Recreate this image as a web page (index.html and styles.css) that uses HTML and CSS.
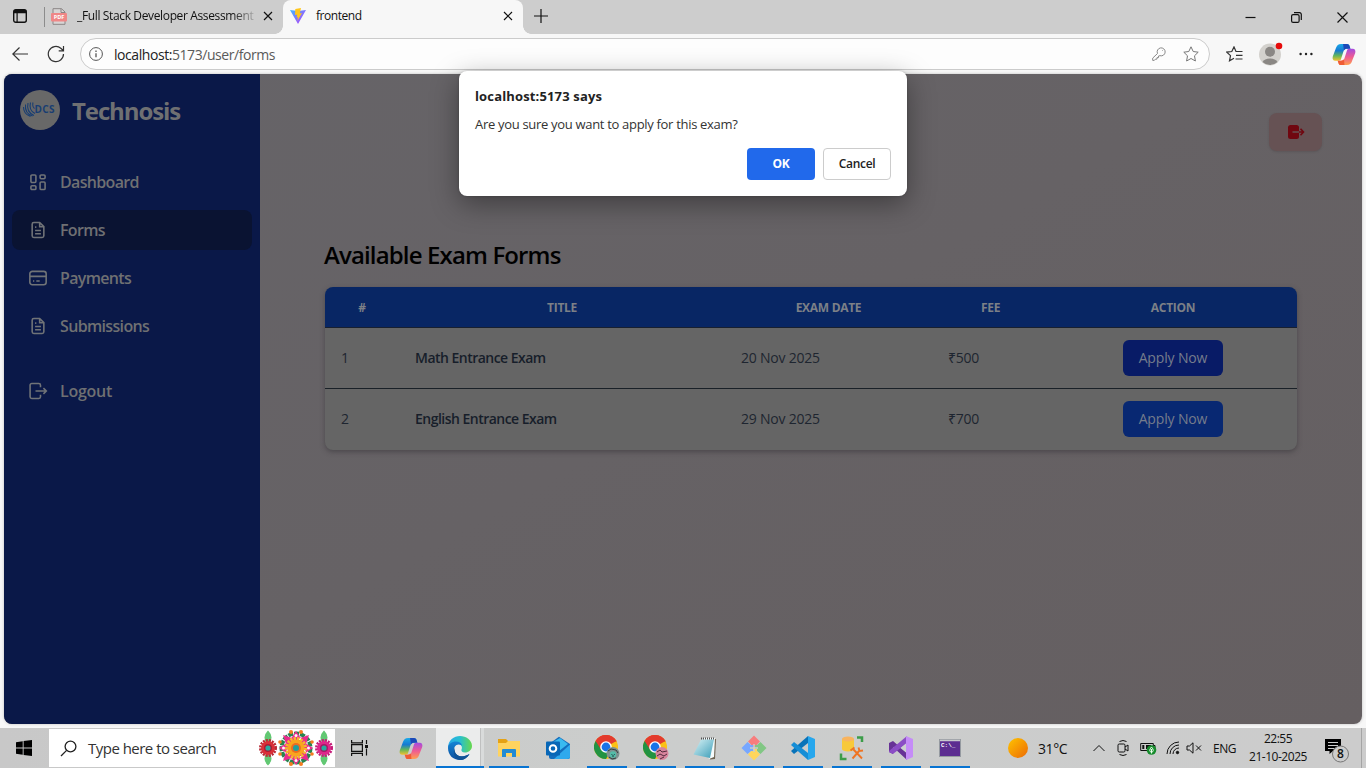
FILE: index.html
```html
<!DOCTYPE html>
<html lang="en">
<head>
<meta charset="utf-8">
<title>frontend</title>
<link rel="stylesheet" href="styles.css">
</head>
<body>
<svg class="defs" aria-hidden="true">
  <defs>
    <linearGradient id="cpA" x1="0" y1="0" x2="0" y2="1"><stop offset="0" stop-color="#1aa9e8"/><stop offset=".4" stop-color="#1679d2"/><stop offset=".7" stop-color="#63b65a"/><stop offset="1" stop-color="#f2c230"/></linearGradient>
    <linearGradient id="cpB" x1="0" y1="0" x2="0" y2="1"><stop offset="0" stop-color="#a34be0"/><stop offset=".5" stop-color="#ee5b93"/><stop offset="1" stop-color="#ffa04e"/></linearGradient>
    <linearGradient id="vt" x1="0" y1="0" x2="1" y2="1"><stop offset="0" stop-color="#41b8ff"/><stop offset="1" stop-color="#bd34fe"/></linearGradient>
    <linearGradient id="edA" x1="0" y1="0" x2="1" y2="0"><stop offset="0" stop-color="#2aa9e8"/><stop offset=".5" stop-color="#27bfd0"/><stop offset="1" stop-color="#67d84b"/></linearGradient>
    <linearGradient id="edB" x1="0" y1="0" x2="0" y2="1"><stop offset="0" stop-color="#1585d5"/><stop offset="1" stop-color="#0c4f9e"/></linearGradient>
    <linearGradient id="sun" x1="0" y1="0" x2="1" y2="1"><stop offset="0" stop-color="#ffc400"/><stop offset="1" stop-color="#ec6a06"/></linearGradient>
    <linearGradient id="np" x1="0" y1="0" x2="1" y2="1"><stop offset="0" stop-color="#d9f3f6"/><stop offset="1" stop-color="#3b9db8"/></linearGradient>
    <symbol id="copilot" viewBox="0 0 24 24">
      <path d="M9 1h6c2 0 2.500 1 3 3l.7 2H15c-2 0-3 1-3.500 2.600L9 16.500C8.500 18 8 18.500 6 18.500H3C.5 18.500-.4 16.500.3 14L3.500 5.500C4.500 2.500 6 1 9 1z" fill="url(#cpA)"/>
      <path d="M11 1h4c2 0 2.500 1 3 3l.7 2H15c-1.500 0-2.500.7-3 1.800z" fill="#1c49b8"/>
      <path d="M15 23H9c-2 0-2.500-1-3-3l-.6-1.600H9c2 0 3-1 3.500-2.600L15 8c.5-1.500 1-2 3-2h3c2.500 0 3.400 2 2.700 4.500L20.500 18.500c-1 3-2.500 4.500-5.500 4.500z" fill="url(#cpB)"/>
      <path d="M12.500 23H9c-2 0-2.500-1-3-3l-.6-1.600H9c1.300 0 2.300-.5 3-1.500z" fill="#ef5c35"/>
    </symbol>
    <symbol id="doc" viewBox="0 0 24 24"><path d="M14 3H7a2 2 0 0 0-2 2v14a2 2 0 0 0 2 2h10a2 2 0 0 0 2-2V8zM14 3v5h5M8.500 12.500h7M8.500 16.500h7M8.500 8.500h1.500"/></symbol>
    <symbol id="cross" viewBox="0 0 10 10"><path d="M1 1l8 8M9 1l-8 8"/></symbol>
    <symbol id="chrome" viewBox="0 0 26 26">
      <circle cx="12" cy="12" r="12" fill="#fbc116"/>
      <path d="M12 12L1.600 6A12 12 0 0 1 22.400 6z" fill="#e33b2e"/><path d="M1.600 6A12 12 0 0 0 12 24l5.200-9L12 12z" fill="#229342"/><path d="M12 6.500h10.700L22.400 6A12 12 0 0 0 1.600 6L7 14.500z" fill="#e33b2e"/>
      <circle cx="12" cy="12" r="5.800" fill="#fff"/><circle cx="12" cy="12" r="4.400" fill="#1a73e8"/>
    </symbol>
  </defs>
</svg>

<header class="tabs">
  <div class="tab-actions"><svg width="14" height="14" viewBox="0 0 14 14"><rect x=".7" y=".7" width="12.600" height="12.600" rx="2" fill="none" stroke="#111" stroke-width="1.400"/><path d="M1 1h12v3.200H1zM3.500 4h1.200v9H3.500z" fill="#111"/></svg></div>
  <div class="tab tab-idle">
    <svg class="pdf" width="16" height="17" viewBox="0 0 16 17"><path d="M2 .7h8.500L14 4v12.300H2z" fill="#d8d5d5" stroke="#8b8585"/><path d="M10 .7V4.500h4" fill="none" stroke="#8b8585"/><rect x="0" y="5" width="16" height="8.500" rx="1" fill="#ef8787"/><text x="8" y="11.400" class="pdf-text">PDF</text></svg>
    <span class="tab-title fade">_Full Stack Developer Assessment</span>
    <svg class="cross" width="10" height="10"><use href="#cross"/></svg>
  </div>
  <div class="tab tab-active">
    <svg width="16" height="16" viewBox="0 0 16 16"><path d="M0 2l8 1 8-1-8 14z" fill="url(#vt)"/><path d="M11 0L5.300 1 5 7l2.200-.4-.6 3 1.400-.3-.7 3.700L12 5l-2.200.4z" fill="#ffc61c"/></svg>
    <span class="tab-title">frontend</span>
    <svg class="cross" width="10" height="10"><use href="#cross"/></svg>
  </div>
  <svg class="plus" width="14" height="14" viewBox="0 0 14 14"><path d="M7 0v14M0 7h14"/></svg>
  <div class="window-buttons">
    <svg width="11" height="11" viewBox="0 0 11 11"><path d="M.5 5.500h10"/></svg>
    <svg width="11" height="11" viewBox="0 0 11 11"><rect x=".6" y="2.600" width="7.500" height="7.800" rx="1.500"/><path d="M3 .6h5a2 2 0 0 1 2.300 2V8"/></svg>
    <svg width="11" height="11" viewBox="0 0 11 11"><path d="M.5.5l10 10M10.500.5l-10 10"/></svg>
  </div>
</header>

<div class="toolbar">
  <svg class="nav" width="16" height="14" viewBox="0 0 16 14"><path d="M16 7H.8M7.500.5L.8 7l6.700 6.500"/></svg>
  <svg class="nav" width="18" height="18" viewBox="0 0 18 18"><path d="M16.500 9A7.600 7.600 0 1 1 13.800 3.200l2.200 2M16.500 1v4.800h-4.800"/></svg>
  <div class="address">
    <svg width="14" height="14" viewBox="0 0 14 14"><circle cx="7" cy="7" r="6.400"/><path d="M7 6.200v4M7 3.600v1.300" stroke-width="1.300"/></svg>
    <span class="url"><b>localhost:</b>5173/user/forms</span>
    <svg class="key" width="14" height="14" viewBox="0 0 14 14"><path d="M5.500 6.500A4 4 0 1 1 8 8.700L6.500 9v1.600H5v1.500H3.500L2.300 13.400H.7v-2.300zM10.300 3.500h.6"/></svg>
    <svg class="fav" width="16" height="16" viewBox="0 0 16 16"><path d="M8 .8l2.200 4.700 5 .7-3.700 3.600.9 5.200L8 12.500 3.600 15l.9-5.200L.8 6.200l5-.7z"/></svg>
  </div>
  <svg class="nav favlist" width="17" height="16" viewBox="0 0 17 16"><path d="M10.500 5.500L10 5.400 8 .9 5.800 5.500l-5 .6 3.700 3.500-1 5.200L8 12.300M10 5.500h6.500M10 9.300h6.500M9.500 13h7"/></svg>
  <svg class="avatar" width="24" height="24" viewBox="0 0 24 24"><circle cx="11" cy="12.500" r="11" fill="#d3d1cd"/><circle cx="11" cy="9.800" r="5" fill="#8a8784"/><path d="M3.500 20a8 5.500 0 0 1 15 0 11 11 0 0 1-15 0z" fill="#8a8784"/><circle cx="20" cy="4" r="3.300" fill="#e60b0b"/></svg>
  <svg class="dots" width="14" height="4" viewBox="0 0 14 4"><circle cx="1.600" cy="2" r="1.200"/><circle cx="7" cy="2" r="1.200"/><circle cx="12.400" cy="2" r="1.200"/></svg>
  <svg class="cp" width="24" height="23"><use href="#copilot"/></svg>
</div>

<div class="viewport">
  <div class="page">
    <aside class="sidebar">
      <div class="brand">
        <svg width="40" height="40" viewBox="0 0 40 40"><circle cx="20" cy="20" r="20" fill="#686868"/><g fill="none" stroke="#193e72" stroke-width="1.100"><path d="M3.500 17q0 7 7 9.500M5.500 14.500q-1 9 7 11.500M8 13q-2 9 6 12.500M10.500 12.500q-2 8 4.500 11M13 12.500q-1 4 1.500 6"/></g><text x="14.500" y="23.300" class="logo-text">DCS</text></svg>
        <span>Technosis</span>
      </div>
      <nav class="menu">
        <a><svg viewBox="0 0 24 24"><rect x="3.500" y="3.500" width="6" height="9" rx="1.300"/><rect x="14.500" y="3.500" width="6" height="4.500" rx="1.300"/><rect x="3.500" y="16.500" width="6" height="4.500" rx="1.300"/><rect x="14.500" y="12" width="6" height="9" rx="1.300"/></svg><span>Dashboard</span></a>
        <a class="current"><svg><use href="#doc"/></svg><span>Forms</span></a>
        <a><svg viewBox="0 0 24 24"><rect x="2.200" y="4" width="19.600" height="16" rx="3"/><path d="M2.200 10h19.600M6 15.500h1.500M10 15.500h4"/></svg><span>Payments</span></a>
        <a><svg><use href="#doc"/></svg><span>Submissions</span></a>
        <a class="logout"><svg viewBox="0 0 24 24"><path d="M15 7.500V5a2 2 0 0 0-2-2H4.500a2 2 0 0 0-2 2v14a2 2 0 0 0 2 2H13a2 2 0 0 0 2-2v-2.500M9 12h13M18.500 8.500L22 12l-3.500 3.500"/></svg><span>Logout</span></a>
      </nav>
    </aside>
    <main class="content">
      <button class="exit"><svg width="18" height="16" viewBox="0 0 18 16"><rect x="1" y="1" width="11" height="14" rx="2.500" fill="#700710"/><path d="M11.500 8H16.500M13.500 4.800L16.500 8l-3 3.200" fill="none" stroke="#700710" stroke-width="1.600"/><path d="M5.500 8H12" stroke="#675052" stroke-width="1.300"/></svg></button>
      <h1>Available Exam Forms</h1>
      <table>
        <colgroup><col class="c1"><col class="c2"><col class="c3"><col class="c4"><col class="c5"></colgroup>
        <thead><tr><th>#</th><th>TITLE</th><th>EXAM DATE</th><th>FEE</th><th>ACTION</th></tr></thead>
        <tbody>
          <tr><td>1</td><td class="name"><span>Math Entrance Exam</span></td><td>20 Nov 2025</td><td class="fee">₹500</td><td class="act"><button class="apply focused">Apply Now</button></td></tr>
          <tr><td>2</td><td class="name"><span>English Entrance Exam</span></td><td>29 Nov 2025</td><td class="fee">₹700</td><td class="act"><button class="apply">Apply Now</button></td></tr>
        </tbody>
      </table>
    </main>
  </div>
</div>

<section class="dialog" role="dialog">
  <h2>localhost:5173 says</h2>
  <p>Are you sure you want to apply for this exam?</p>
  <div class="dialog-buttons"><button class="ok">OK</button><button class="cancel">Cancel</button></div>
</section>

<footer class="taskbar">
  <div class="start"><svg width="16" height="16" viewBox="0 0 16 16"><path d="M0 2.200L6.700 1.200v6.300H0zM7.600 1.100L16 0v7.500H7.600zM0 8.500h6.700v6.300L0 13.800zM7.600 8.500H16V16l-8.400-1.100z"/></svg></div>
  <div class="search">
    <svg class="lens" width="17" height="17" viewBox="0 0 17 17"><circle cx="10.500" cy="6.500" r="5.400"/><path d="M6.600 10.400L1 16"/></svg>
    <span>Type here to search</span>
    <svg class="flowers" width="74" height="38" viewBox="0 0 74 38">
      <path d="M9 3q5 5 0 12-5-7 0-12zM9 35q5-5 0-12-5 7 0 12zM65 3q5 5 0 12-5-7 0-12zM65 35q5-5 0-12-5 7 0 12z" fill="#62c873" stroke="#62c873" stroke-width="2"/>
      <circle cx="9" cy="19" r="7.500" fill="none" stroke="#b82936" stroke-width="3" stroke-dasharray="2 1"/><circle cx="9" cy="19" r="7" fill="#da3038"/><circle cx="9" cy="19" r="4" fill="#a81c35"/><circle cx="9" cy="19" r="2.600" fill="#28aaa0"/>
      <circle cx="65" cy="19" r="7.500" fill="none" stroke="#c41c79" stroke-width="3" stroke-dasharray="2 1"/><circle cx="65" cy="19" r="7" fill="#df268b"/><circle cx="65" cy="19" r="4" fill="#a41965"/><circle cx="65" cy="19" r="2.600" fill="#28aaa0"/>
      <circle cx="37" cy="19" r="14.500" fill="none" stroke="#288451" stroke-width="4" stroke-dasharray="5 1"/>
      <g fill="#e92c8c"><path d="M37 2l6 9H31zM37 36l6-9H31zM20 19l9-6v12zM54 19l-9-6v12zM24 6l12 4-8 8zM50 6l-12 4 8 8zM24 32l12-4-8-8zM50 32l-12-4 8-8z"/></g>
      <g fill="#fff3f8"><circle cx="37" cy="6.500" r="1.500"/><circle cx="37" cy="31.500" r="1.500"/><circle cx="24.500" cy="19" r="1.500"/><circle cx="49.500" cy="19" r="1.500"/></g>
      <g fill="#f47b20"><circle cx="32" cy="3" r="2"/><circle cx="42" cy="3" r="2"/><circle cx="32" cy="35" r="2"/><circle cx="42" cy="35" r="2"/><circle cx="21" cy="13" r="1.800"/><circle cx="21" cy="25" r="1.800"/><circle cx="53" cy="13" r="1.800"/><circle cx="53" cy="25" r="1.800"/></g>
      <circle cx="37" cy="19" r="9.500" fill="none" stroke="#f5b72e" stroke-width="3" stroke-dasharray="2.500 1"/><circle cx="37" cy="19" r="8.500" fill="#f9a51e"/><circle cx="37" cy="19" r="5" fill="#ec6c22"/><circle cx="37" cy="19" r="3" fill="#239e9a"/>
    </svg>
  </div>
  <div class="apps">
    <div class="app view"><svg width="18" height="16" viewBox="0 0 18 16"><path d="M.6 0v2.800h10.800V0M.6 4.600h10.800v6.800H.6zM.6 16v-2.700h10.800V16M15.500 0v4M15.500 8.500V15.500" fill="none" stroke="#111" stroke-width="1.200"/><rect x="14" y="5" width="3" height="3" fill="#111"/></svg></div>
    <div class="app"><svg width="24" height="23"><use href="#copilot"/></svg></div>
    <div class="app selected"><svg width="26" height="26" viewBox="0 0 26 26"><path d="M1 13C1 5 7 1 13 1s12 4 12 10c0 4-3.500 6.500-7 6.500-3 0-4-1.500-3.500-3 1.500-3-1-6-5-6-5 0-8.500 4-8.500 4.500z" fill="url(#edA)"/><path d="M1 13c0-4 4-6.500 8-6.500 3 0 5.500 1.500 6 4-5-3-9 1-7.500 5.500C9 22 16 23 22.500 19 20 23 17 25 13 25 6 25 1 20 1 13z" fill="url(#edB)"/><path d="M8 12.500c-2 7 5 12 14.500 6.500-3 5-7 6-9.500 6-5-1-8-7-5-12.500z" fill="#105396"/></svg></div>
    <div class="app running"><svg width="22" height="20" viewBox="0 0 22 20"><path d="M0 1h8l2 2h12v4H0z" fill="#e5a214"/><path d="M0 5h8l2-2h12v15.500H0z" fill="#ffd35e"/><path d="M4 19v-7q0-1 1-1h12q1 0 1 1v7h-4v-4H8v4z" fill="#228bd4"/></svg></div>
    <div class="app"><svg width="26" height="24" viewBox="0 0 26 24"><path d="M4 8L14 .8 25 8v13q0 2-2 2H6q-2 0-2-2z" fill="#136dbd"/><path d="M8 6l7-4 8 6-9 7-6-4z" fill="#39baf0"/><path d="M25 8.500v12q0 2.500-3 2.500H9z" fill="#2fa9ed"/><rect x="1" y="5.500" width="14" height="14" rx="1" fill="#0867b7"/><circle cx="8" cy="12.500" r="3.300" fill="none" stroke="#fff" stroke-width="2"/></svg></div>
    <div class="app running"><svg width="26" height="26" viewBox="0 0 26 26"><use href="#chrome" width="26" height="26"/><circle cx="19" cy="18.500" r="6.500" fill="#7f918f"/><path d="M14 16l3-2 5 1 2 3M15 22l3 2 4-1" fill="none" stroke="#343d3d" stroke-width="1"/><circle cx="19" cy="19.500" r="3.200" fill="#54bda9"/><path d="M17.500 19.500h.8m1.600 0h.8m-2.700 1.500h2" stroke="#183c3c"/></svg></div>
    <div class="app running"><svg width="26" height="26" viewBox="0 0 26 26"><use href="#chrome" width="26" height="26"/><circle cx="19" cy="18.500" r="6.500" fill="#d7849c"/><path d="M14 17l3-2 2 2 5-1M14 21l3-2 4 2 3-2M17 24l4-2" fill="none" stroke="#522c3d" stroke-width="1"/></svg></div>
    <div class="app running"><svg width="24" height="24" viewBox="0 0 24 24"><path d="M12 2l11 1-1 20-5 .5z" fill="#6d6352"/><path d="M10 2h12l-1 19-5 2z" fill="#f5fbfb"/><path d="M8 3.500h13l-4 18.500L.5 18.500z" fill="url(#np)"/><path d="M8 2.500h14" stroke="#555" stroke-width="2" stroke-dasharray="1 1"/></svg></div>
    <div class="app running"><svg width="26" height="26" viewBox="0 0 26 26"><path d="M13 .5l6 6-3 3v2.500h-6v-2.500L7 6.500z" fill="#f77d7d"/><path d="M25.500 13l-6 6-3.500-3h-2v-6h2l3.500-3z" fill="#81c784"/><path d="M13 25.500l-6-6 3-3.500v-2h6v2l3 3.500z" fill="#ffd65c"/><path d="M.5 13l6-6 3.500 3h2v6h-2l-3.500 3z" fill="#77a7ff"/><path d="M13 9v8M9 13h8" stroke="#cbcdcc" stroke-width="1.500"/></svg></div>
    <div class="app running"><svg width="26" height="26" viewBox="0 0 26 26"><path d="M18 1l7 3v18l-7 3z" fill="#27a7ed"/><path d="M18 1v7L4 19l-3-3z" fill="#0873b9"/><path d="M18 25v-7L4 7l-3 3z" fill="#168ed6"/></svg></div>
    <div class="app running"><svg width="26" height="26" viewBox="0 0 26 26"><path d="M3 4v10a6 2.500 0 0 0 12 0V4z" fill="#f8c93a"/><ellipse cx="9" cy="4" rx="6" ry="2.500" fill="#f8b45e"/><path d="M18 2.500h5V7M2 18.500V24h5.500" fill="none" stroke="#3c9d49" stroke-width="2.500"/><path d="M13.500 23.500l7-8M14.500 14.500l8.500 9M11.500 15.500l4-3M19.500 12.500l1 3.500 3.500-.5" stroke="#ef7423" stroke-width="1.900" fill="none"/></svg></div>
    <div class="app running"><svg width="26" height="26" viewBox="0 0 26 26"><path d="M1 8l4-2 14 12v7L5 12v7l-4-2z" fill="#673296"/><path d="M1 17l4 2L19 8V1L1 16z" fill="#8b4dc5"/><path d="M18 1l7 3v18l-7 3z" fill="#c58cf7"/><path d="M12.500 13l5.500-4.500v9z" fill="#cdd0d0"/></svg></div>
    <div class="app running"><svg width="22" height="18" viewBox="0 0 22 18"><rect x=".5" y=".5" width="21" height="17" fill="#5c2d91" stroke="#959aa0"/><path d="M1 1.500h20" stroke="#c8cace" stroke-width="1.500"/><text x="2" y="8" class="cmd-text">C:\_</text></svg></div>
  </div>
  <div class="tray">
    <svg class="sun" width="22" height="22" viewBox="0 0 22 22"><circle cx="11" cy="11" r="10" fill="url(#sun)"/></svg>
    <span class="temp">31°C</span>
    <svg class="chev" width="12" height="8" viewBox="0 0 12 8"><path d="M.5 7L6 1.500 11.500 7"/></svg>
    <svg class="meet" width="12" height="16" viewBox="0 0 12 16"><rect x="1" y="4" width="7" height="8" rx="1.200"/><path d="M8 7l3-2v6L8 9M2.500 1.500Q6-.5 9.500 1.500M2.500 14.500Q6 16.500 9.500 14.500"/></svg>
    <svg class="battery" width="17" height="14" viewBox="0 0 17 14"><path d="M.7 2.500h12.600v7H.7zM13.500 4.500h1.500v3h-1.500" fill="none" stroke="#111"/><path d="M2.300 4h2v4h-2zM6 4h5v4H6z" fill="#111"/><circle cx="11.500" cy="9" r="4.800" fill="#168b2c"/><path d="M11.500 6q3.500 4 0 5.500Q8 10 11.500 6zM11.500 8v4.500" fill="none" stroke="#e8ffeb" stroke-width="1"/></svg>
    <svg class="wifi" width="14" height="14" viewBox="0 0 14 14"><path d="M1 13A12 12 0 0 1 13 1M4 13a9 9 0 0 1 9-9M7 13a6 6 0 0 1 6-6" /><circle cx="11.500" cy="11.500" r="1.200" fill="#111"/></svg>
    <svg class="volume" width="16" height="12" viewBox="0 0 16 12"><path d="M1 4h2.500L7 .8v10.400L3.500 8H1zM10 3.500l5 5M15 3.500l-5 5"/></svg>
    <span class="lang">ENG</span>
    <div class="clock"><span>22:55</span><span>21-10-2025</span></div>
    <div class="notice"><svg width="26" height="26" viewBox="0 0 26 26"><path d="M1 1h16v12H9l-3.500 3v-3H1z" fill="#000"/><path d="M4 4.500h10M4 7.500h10M4 10.500h6" stroke="#ccc"/><circle cx="16.500" cy="16" r="8" fill="#ccc" stroke="#777"/><text x="16.500" y="20.200" class="badge-text">8</text></svg></div>
    <i class="peek"></i>
  </div>
</footer>
</body>
</html>
```
FILE: styles.css
```css
* { box-sizing: border-box; }
body { margin: 0; width: 1366px; height: 768px; overflow: hidden; display: flex; flex-direction: column; background: #f7f7f7; font-family: "Open Sans", "Noto Sans", sans-serif; position: relative; color: #111; }
svg { display: block; flex: none; }
span, p, h1, h2, td, th, button { white-space: nowrap; }
button { border: 0; font-family: inherit; padding: 0; }
.defs { position: absolute; width: 0; height: 0; }

.tabs { height: 34px; flex: none; background: #cdcdcd; display: flex; align-items: center; }
.tab-actions { width: 45px; height: 20px; padding: 2px 0 0 13px; border-right: 1px solid #8c8c8c; }
.tab { display: flex; align-items: center; height: 34px; font-size: 12px; }
.tab-idle { width: 238px; padding: 0 10px 2px 6px; }
.tab-idle .tab-title { margin-left: 10px; width: 180px; letter-spacing: -.36px; }
.fade { -webkit-mask-image: linear-gradient(90deg, #000 155px, transparent 182px); mask-image: linear-gradient(90deg, #000 155px, transparent 182px); }
.tab-active { width: 240px; padding: 0 10px 2px 7px; background: #f7f7f7; border-radius: 8px 8px 0 0; position: relative; }
.tab-active::before, .tab-active::after { content: ""; position: absolute; bottom: 0; width: 8px; height: 8px; }
.tab-active::before { left: -8px; background: radial-gradient(circle at 0 0, #cdcdcd 7.5px, #f7f7f7 8px); }
.tab-active::after { right: -8px; background: radial-gradient(circle at 100% 0, #cdcdcd 7.5px, #f7f7f7 8px); }
.tab-active .tab-title { margin-left: 10px; letter-spacing: -.45px; }
.tab-title { padding-bottom: 1px; }
.tab .cross { margin-left: auto; }
.cross, .plus, .window-buttons svg { stroke: #111; stroke-width: 1.2; fill: none; }
.plus { margin: 0 0 3px 11px; }
.window-buttons { margin: 0 18px 0 auto; display: flex; gap: 35px; }
.pdf-text { font: bold 5.500px "Open Sans", sans-serif; fill: #fff; text-anchor: middle; }

.toolbar { height: 40px; flex: none; display: flex; align-items: center; padding: 0 10px 0 12px; background: #f7f7f7; }
.nav { fill: none; stroke: #333; stroke-width: 1.2; }
.nav + .nav { margin-left: 19px; }
.address { margin-left: 15px; width: 1130px; height: 32px; border: 1px solid #cbcbcb; border-radius: 16px; background: #fdfdfd; display: flex; align-items: center; padding: 0 10px 0 8px; fill: none; stroke: #555; }
.address span { stroke: none; }
.url { margin-left: 11px; font-size: 14px; color: #5a5a5a; letter-spacing: -.44px; }
.url b { font-weight: 400; color: #222; }
.key { margin-left: auto; stroke: #888; }
.fav { margin-left: 17px; stroke: #777; }
.favlist { margin-left: 16px; }
.avatar { margin-left: 16px; }
.dots { margin-left: 16px; fill: #222; }
.cp { margin-left: auto; }

.viewport { height: 654px; flex: none; padding: 0 4px 4px; }
.page { height: 650px; display: flex; border-radius: 8px; overflow: hidden; box-shadow: 0 0 3px #bbb; background: linear-gradient(150deg, #666468 0%, #666265 50%, #655f61 100%); }
.sidebar { width: 256px; background: #0a1848; color: #6f7072; padding: 16px 8px; }
.brand { height: 40px; display: flex; align-items: center; gap: 12px; padding-left: 8px; font-size: 24px; font-weight: 700; letter-spacing: -1.1px; }
.logo-text { font: 700 10px "Open Sans", sans-serif; letter-spacing: .4px; fill: #193e72; }
.menu { display: flex; flex-direction: column; gap: 8px; padding-top: 32px; }
.menu a { height: 40px; border-radius: 8px; display: flex; align-items: center; gap: 12px; padding-left: 16px; font-size: 16px; font-weight: 600; letter-spacing: -.66px; }
.menu svg { width: 20px; height: 20px; fill: none; stroke: #707377; stroke-width: 1.9; }
.menu .current { background: #0a1332; }
.menu .logout { margin-top: 17px; letter-spacing: -.25px; }
.content { flex: 1; padding: 39px 40px 0 64px; display: flex; flex-direction: column; }
.exit { align-self: flex-end; width: 53px; height: 38px; border-radius: 8px; background: #665254; display: flex; align-items: center; justify-content: center; box-shadow: 0 1px 2px rgba(60,50,55,.25); }
h1 { margin: 88px 0 0; font-size: 24px; line-height: 32px; font-weight: 600; letter-spacing: -.86px; color: #000; }
table { margin: 16px 0 0 1px; width: 972px; table-layout: fixed; border-collapse: separate; border-spacing: 0; border-radius: 8px; overflow: hidden; background: #656565; box-shadow: 0 2px 5px rgba(50,46,52,.5); font-size: 14px; color: #1e2530; }
.c1 { width: 74px; } .c2 { width: 326px; } .c3 { width: 207px; } .c4 { width: 117px; } .c5 { width: 248px; }
th { height: 41px; padding: 0; background: #082664; border-bottom: 1px solid #182030; color: #7c8087; font-size: 12px; font-weight: 700; letter-spacing: -.3px; }
td { height: 61px; padding: 0 16px 1px; letter-spacing: -.22px; }
tbody tr:first-child td { border-bottom: 1px solid #192027; }
tbody tr:last-child td { height: 61px; padding-bottom: 2px; }
tbody tr:first-child .act { padding-bottom: 0; }
.name { font-weight: 600; color: #171e2a; letter-spacing: -.52px; }
.act { text-align: center; }
.apply { width: 100px; height: 36px; border-radius: 6px; background: #082872; color: #757c8c; font-size: 14px; font-weight: 500; letter-spacing: -.15px; padding-bottom: 1px; }
.apply.focused { background: #081b66; }

.dialog { position: absolute; left: 459px; top: 71px; width: 448px; height: 125px; border-radius: 8px; background: #fff; padding: 16px; box-shadow: 0 8px 28px rgba(0,0,0,.38), 0 0 3px rgba(0,0,0,.2); }
h2 { margin: 0; font-size: 13px; line-height: 19px; font-weight: 700; letter-spacing: .15px; color: #222; }
.dialog p { margin: 9px 0 0; font-size: 13px; line-height: 18px; letter-spacing: -.31px; color: #333; }
.dialog-buttons { display: flex; justify-content: flex-end; gap: 8px; margin-top: 15px; }
.dialog-buttons button { width: 68px; height: 32px; border-radius: 4px; font-size: 12px; font-weight: 600; letter-spacing: -.3px; padding-bottom: 1px; }
.dialog-buttons .ok { background: #2169eb; color: #fff; font-weight: 700; }
.cancel { background: #fff; border: 1px solid #ccc !important; color: #222; }

.taskbar { height: 40px; flex: none; display: flex; background: linear-gradient(90deg, #c8c8c8, #cbcdcc 45%, #cccccc); }
.start { width: 49px; display: flex; align-items: center; justify-content: center; padding-right: 1px; }
.search { width: 286px; height: 38px; margin-top: 1px; background: #fff; display: flex; align-items: center; font-size: 15px; letter-spacing: -.52px; color: #333; padding-left: 11px; }
.lens { fill: none; stroke: #222; stroke-width: 1.3; }
.search span { margin-left: 11px; }
.flowers { margin-left: auto; margin-right: 2px; }
.apps { display: flex; width: 640px; padding-left: 1px; }
.app { width: 49px; height: 40px; flex: none; display: flex; align-items: center; justify-content: center; position: relative; padding-right: 2px; }
.app.view { width: 50px; }
.app.view + .app { width: 50px; padding-right: 0; }
.selected { background: linear-gradient(90deg, #ebecec 44px, #bfc0c0 44px, #bfc0c0 45px, #d9dbdb 45px, #d9dbdb 48px, transparent 48px); }
.selected::before { content: ""; position: absolute; bottom: 0; left: 0; width: 48px; height: 2px; background: #0874d2; }
.running::after { content: ""; position: absolute; bottom: 0; left: 4px; width: 40px; height: 2px; background: #0874d2; }
.cmd-text { font: bold 6px "Liberation Mono", monospace; fill: #fff; }
.tray { flex: 1; display: flex; align-items: center; padding-left: 32px; font-size: 13px; }
.temp { margin-left: 9px; width: 46px; font-size: 14px; letter-spacing: -.4px; }
.tray svg { fill: none; stroke: #111; }
.tray .sun { stroke: none; }
.chev { margin-left: 9px; }
.meet { margin-left: 12px; }
.battery { margin-left: 11px; }
.battery, .notice svg { stroke: none !important; }
.wifi { margin-left: 9px; }
.volume { margin-left: 6px; }
.lang { margin-left: 11px; width: 24px; font-size: 12px; letter-spacing: -.5px; }
.clock { margin-left: 7px; width: 68px; display: flex; flex-direction: column; align-items: center; font-size: 12px; line-height: 18px; letter-spacing: -.48px; }
.notice { margin: 6px 0 0 12px; }
.peek { margin-left: auto; margin-right: 4px; width: 1px; height: 40px; background: #a5a5a5; }
.badge-text { font: 600 12px "Open Sans", sans-serif; fill: #111; stroke: none; text-anchor: middle; }
```
